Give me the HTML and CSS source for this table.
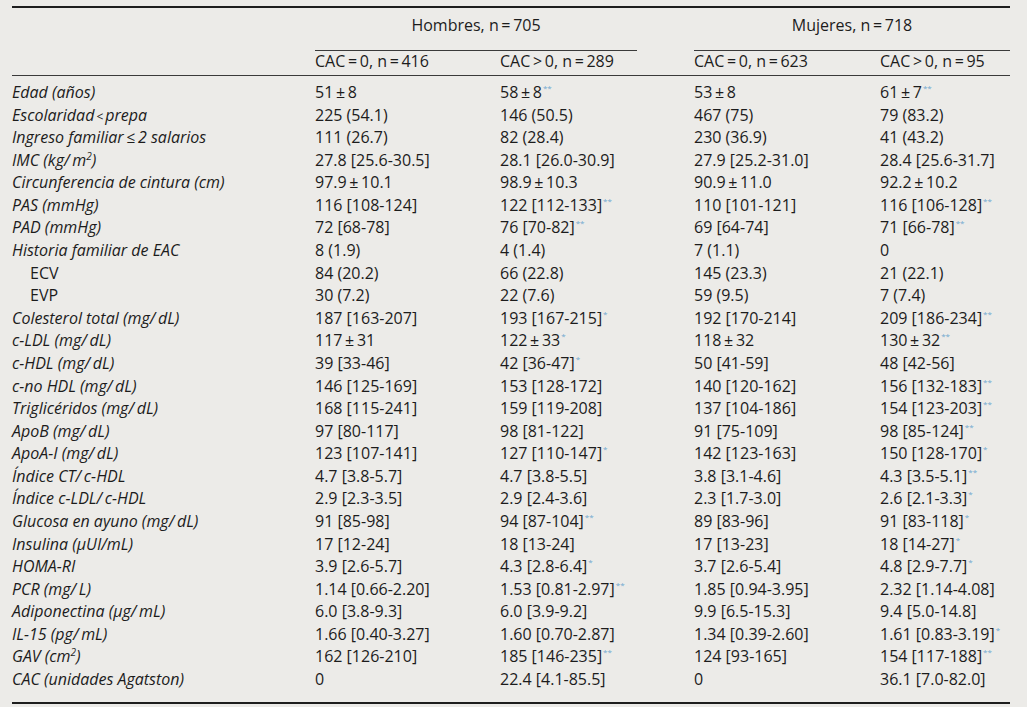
FILE: index.html
```html
<!DOCTYPE html>
<html lang="es">
<head>
<meta charset="utf-8">
<title>Tabla</title>
<link rel="stylesheet" href="styles.css">
</head>
<body>
<div class="tbl">
  <div class="head1">
    <div class="lab"></div>
    <div class="grp grp-h">Hombres, n&thinsp;=&thinsp;705</div>
    <div class="grp grp-m">Mujeres, n&thinsp;=&thinsp;718</div>
  </div>
  <div class="head2 row">
    <div class="lab"></div>
    <div>CAC&thinsp;=&thinsp;0, n&thinsp;=&thinsp;416</div>
    <div>CAC&thinsp;&gt;&thinsp;0, n&thinsp;=&thinsp;289</div>
    <div>CAC&thinsp;=&thinsp;0, n&thinsp;=&thinsp;623</div>
    <div>CAC&thinsp;&gt;&thinsp;0, n&thinsp;=&thinsp;95</div>
  </div>
  <div class="body">
    <div class="row"><div class="lab">Edad (años)</div><div>51&thinsp;±&thinsp;8</div><div>58&thinsp;±&thinsp;8<sup>**</sup></div><div>53&thinsp;±&thinsp;8</div><div>61&thinsp;±&thinsp;7<sup>**</sup></div></div>
    <div class="row"><div class="lab">Escolaridad<span class="lt">&thinsp;&lt;&thinsp;</span>prepa</div><div>225 (54.1)</div><div>146 (50.5)</div><div>467 (75)</div><div>79 (83.2)</div></div>
    <div class="row"><div class="lab">Ingreso familiar&thinsp;≤&thinsp;2 salarios</div><div>111 (26.7)</div><div>82 (28.4)</div><div>230 (36.9)</div><div>41 (43.2)</div></div>
    <div class="row"><div class="lab">IMC (kg/&thinsp;m<sup class="n">2</sup>)</div><div>27.8 [25.6-30.5]</div><div>28.1 [26.0-30.9]</div><div>27.9 [25.2-31.0]</div><div>28.4 [25.6-31.7]</div></div>
    <div class="row"><div class="lab">Circunferencia de cintura (cm)</div><div>97.9&thinsp;±&thinsp;10.1</div><div>98.9&thinsp;±&thinsp;10.3</div><div>90.9&thinsp;±&thinsp;11.0</div><div>92.2&thinsp;±&thinsp;10.2</div></div>
    <div class="row"><div class="lab">PAS (mmHg)</div><div>116 [108-124]</div><div>122 [112-133]<sup>**</sup></div><div>110 [101-121]</div><div>116 [106-128]<sup>**</sup></div></div>
    <div class="row"><div class="lab">PAD (mmHg)</div><div>72 [68-78]</div><div>76 [70-82]<sup>**</sup></div><div>69 [64-74]</div><div>71 [66-78]<sup>**</sup></div></div>
    <div class="row"><div class="lab">Historia familiar de EAC</div><div>8 (1.9)</div><div>4 (1.4)</div><div>7 (1.1)</div><div>0</div></div>
    <div class="row"><div class="lab sub">ECV</div><div>84 (20.2)</div><div>66 (22.8)</div><div>145 (23.3)</div><div>21 (22.1)</div></div>
    <div class="row"><div class="lab sub">EVP</div><div>30 (7.2)</div><div>22 (7.6)</div><div>59 (9.5)</div><div>7 (7.4)</div></div>
    <div class="row"><div class="lab">Colesterol total (mg/&thinsp;dL)</div><div>187 [163-207]</div><div>193 [167-215]<sup>*</sup></div><div>192 [170-214]</div><div>209 [186-234]<sup>**</sup></div></div>
    <div class="row"><div class="lab">c-LDL (mg/&thinsp;dL)</div><div>117&thinsp;±&thinsp;31</div><div>122&thinsp;±&thinsp;33<sup>*</sup></div><div>118&thinsp;±&thinsp;32</div><div>130&thinsp;±&thinsp;32<sup>**</sup></div></div>
    <div class="row"><div class="lab">c-HDL (mg/&thinsp;dL)</div><div>39 [33-46]</div><div>42 [36-47]<sup>*</sup></div><div>50 [41-59]</div><div>48 [42-56]</div></div>
    <div class="row"><div class="lab">c-no HDL (mg/&thinsp;dL)</div><div>146 [125-169]</div><div>153 [128-172]</div><div>140 [120-162]</div><div>156 [132-183]<sup>**</sup></div></div>
    <div class="row"><div class="lab">Triglicéridos (mg/&thinsp;dL)</div><div>168 [115-241]</div><div>159 [119-208]</div><div>137 [104-186]</div><div>154 [123-203]<sup>**</sup></div></div>
    <div class="row"><div class="lab">ApoB (mg/&thinsp;dL)</div><div>97 [80-117]</div><div>98 [81-122]</div><div>91 [75-109]</div><div>98 [85-124]<sup>**</sup></div></div>
    <div class="row"><div class="lab">ApoA-I (mg/&thinsp;dL)</div><div>123 [107-141]</div><div>127 [110-147]<sup>*</sup></div><div>142 [123-163]</div><div>150 [128-170]<sup>*</sup></div></div>
    <div class="row"><div class="lab">Índice CT/&thinsp;c-HDL</div><div>4.7 [3.8-5.7]</div><div>4.7 [3.8-5.5]</div><div>3.8 [3.1-4.6]</div><div>4.3 [3.5-5.1]<sup>**</sup></div></div>
    <div class="row"><div class="lab">Índice c-LDL/&thinsp;c-HDL</div><div>2.9 [2.3-3.5]</div><div>2.9 [2.4-3.6]</div><div>2.3 [1.7-3.0]</div><div>2.6 [2.1-3.3]<sup>*</sup></div></div>
    <div class="row"><div class="lab">Glucosa en ayuno (mg/&thinsp;dL)</div><div>91 [85-98]</div><div>94 [87-104]<sup>**</sup></div><div>89 [83-96]</div><div>91 [83-118]<sup>*</sup></div></div>
    <div class="row"><div class="lab">Insulina (μUI/mL)</div><div>17 [12-24]</div><div>18 [13-24]</div><div>17 [13-23]</div><div>18 [14-27]<sup>*</sup></div></div>
    <div class="row"><div class="lab">HOMA-RI</div><div>3.9 [2.6-5.7]</div><div>4.3 [2.8-6.4]<sup>*</sup></div><div>3.7 [2.6-5.4]</div><div>4.8 [2.9-7.7]<sup>*</sup></div></div>
    <div class="row"><div class="lab">PCR (mg/&thinsp;L)</div><div>1.14 [0.66-2.20]</div><div>1.53 [0.81-2.97]<sup>**</sup></div><div>1.85 [0.94-3.95]</div><div>2.32 [1.14-4.08]</div></div>
    <div class="row"><div class="lab">Adiponectina (μg/&thinsp;mL)</div><div>6.0 [3.8-9.3]</div><div>6.0 [3.9-9.2]</div><div>9.9 [6.5-15.3]</div><div>9.4 [5.0-14.8]</div></div>
    <div class="row"><div class="lab">IL-15 (pg/&thinsp;mL)</div><div>1.66 [0.40-3.27]</div><div>1.60 [0.70-2.87]</div><div>1.34 [0.39-2.60]</div><div>1.61 [0.83-3.19]<sup>*</sup></div></div>
    <div class="row"><div class="lab">GAV (cm<sup class="n">2</sup>)</div><div>162 [126-210]</div><div>185 [146-235]<sup>**</sup></div><div>124 [93-165]</div><div>154 [117-188]<sup>**</sup></div></div>
    <div class="row"><div class="lab">CAC (unidades Agatston)</div><div>0</div><div>22.4 [4.1-85.5]</div><div>0</div><div>36.1 [7.0-82.0]</div></div>
  </div>
</div>
</body>
</html>
```
FILE: styles.css
```css
html, body {
  margin: 0;
  padding: 0;
  background: #ecebe8;
}
body {
  font-family: "Open Sans", "Noto Sans", sans-serif;
  font-size: 16px;
  color: #1c1c1c;
}
.tbl {
  margin: 6px 17px 0 12px;
  width: 998px;
  border-top: 2px solid #1e1e1e;
  border-bottom: 2px solid #1e1e1e;
}
.head1, .row {
  display: grid;
  grid-template-columns: 303px 185px 194px 186px 130px;
}
.head1 {
  line-height: 22px;
}
.grp {
  grid-column: span 2;
  text-align: center;
  padding: 6px 0 14px;
  border-bottom: 1px solid #3a3a3a;
}
.grp-h { margin-right: 57px; }
.head2 {
  line-height: 18px;
  padding: 1px 0 5px;
  border-bottom: 1px solid #3a3a3a;
}
.body {
  padding: 5px 0 11px;
}
.body .row {
  height: 22.58px;
  line-height: 22.58px;
  white-space: nowrap;
}
.lab {
  font-style: italic;
}
.lab.sub {
  font-style: normal;
  padding-left: 18px;
}
.lt {
  font-size: 12px;
  font-style: normal;
}
sup {
  font-size: 8px;
  line-height: 0;
  vertical-align: 7px;
  color: #6fa8cf;
  letter-spacing: 0;
  margin-left: 1px;
}
sup.n {
  font-size: 10px;
  color: inherit;
  vertical-align: 6px;
  margin-left: 0;
}
```
